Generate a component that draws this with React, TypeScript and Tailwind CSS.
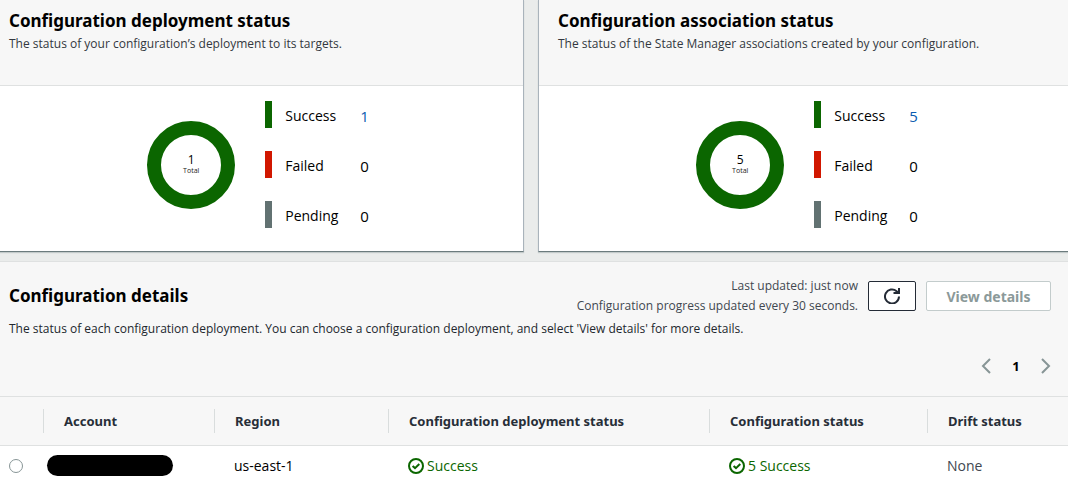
import { useState } from "react";

interface Segment {
  label: string;
  count: number;
  bar: string;
}

interface StatusCardProps {
  title: string;
  description: string;
  segments: Segment[];
}

const deployment: Segment[] = [
  { label: "Success", count: 1, bar: "bg-[#0b6600]" },
  { label: "Failed", count: 0, bar: "bg-[#d11700]" },
  { label: "Pending", count: 0, bar: "bg-[#627272]" },
];

const association: Segment[] = [
  { label: "Success", count: 5, bar: "bg-[#0b6600]" },
  { label: "Failed", count: 0, bar: "bg-[#d11700]" },
  { label: "Pending", count: 0, bar: "bg-[#627272]" },
];

const columns = [
  { label: "Account", width: "w-[171px]" },
  { label: "Region", width: "w-[174px]" },
  { label: "Configuration deployment status", width: "w-[321px]" },
  { label: "Configuration status", width: "w-[218px]" },
  { label: "Drift status", width: "" },
];

function Donut({ total }: { total: number }) {
  return (
    <div className="grid size-[88px] shrink-0 place-items-center rounded-full border-[14px] border-[#0b6600]">
      <div className="flex flex-col items-center">
        <span className="text-[12px] leading-3 text-black">{total}</span>
        <span className="text-[7px] leading-[10px] text-[#222]">Total</span>
      </div>
    </div>
  );
}

function StatusCard({ title, description, segments }: StatusCardProps) {
  const total = segments.reduce((sum, s) => sum + s.count, 0);
  return (
    <section className="border-x border-b border-x-[#a9b3bb] border-b-[#6b7b7d] bg-white shadow-[0_1px_1px_#c3caca]">
      <header className="h-[86px] border-b border-[#dfe1e1] bg-[#f7f7f7] px-[19px] pt-[9px]">
        <h2 className="font-['Noto_Sans',sans-serif] text-[17px] leading-6 font-bold text-black">{title}</h2>
        <p className="text-[12px] leading-[22px] text-[#333840]">{description}</p>
      </header>
      <div className="flex items-center justify-center gap-[30px] pt-[15px] pb-[23px] pl-[3px]">
        <Donut total={total} />
        <ul className="flex flex-col gap-[23px]">
          {segments.map((s) => (
            <li key={s.label} className="flex h-[27px]">
              <span className={`w-[7px] ${s.bar}`} />
              <span className="ml-[13px] w-[75px] pt-[3px] text-[14px] leading-6 text-black">{s.label}</span>
              {s.count > 0 ? (
                <a href="#" className="pt-[3px] text-[15px] leading-6 text-[#0a5cb0]">
                  {s.count}
                </a>
              ) : (
                <span className="pt-[3px] text-[15px] leading-6 text-black">{s.count}</span>
              )}
            </li>
          ))}
        </ul>
      </div>
    </section>
  );
}

function StatusOk({ children }: { children: string }) {
  return (
    <span className="flex items-center gap-[3px] text-[#0b6600]">
      <svg width="16" height="16" viewBox="0 0 16 16" fill="none" stroke="currentColor" strokeWidth="2">
        <circle cx="8" cy="8" r="7" />
        <path d="M4.6 7.9 7 10.1 11.3 6" />
      </svg>
      {children}
    </span>
  );
}

function Chevron({ d }: { d: string }) {
  return (
    <svg width="10" height="16" viewBox="0 0 10 16" fill="none" stroke="#879596" strokeWidth="2">
      <path d={d} />
    </svg>
  );
}

export default function App() {
  const [selected, setSelected] = useState(false);

  return (
    <main className="h-screen overflow-hidden bg-[#eaeceb] font-['Open_Sans',sans-serif]">
      <div className="-mr-[5px] -ml-[11px]">
        <div className="grid grid-cols-2 gap-[14px]">
          <StatusCard
            title="Configuration deployment status"
            description="The status of your configuration’s deployment to its targets."
            segments={deployment}
          />
          <StatusCard
            title="Configuration association status"
            description="The status of the State Manager associations created by your configuration."
            segments={association}
          />
        </div>

        <section className="mt-[9px] border border-[#dfe1e1] bg-[#f7f7f7]">
          <header className="px-[19px] pt-[14px]">
            <div className="flex items-center">
              <h2 className="flex-1 font-['Noto_Sans',sans-serif] text-[17px] leading-6 font-bold text-black">
                Configuration details
              </h2>
              <p className="pr-[10px] text-right text-[12px] leading-5 text-[#414750]">
                Last updated: just now
                <br />
                Configuration progress updated every 30 seconds.
              </p>
              <div className="flex gap-[10px] pr-[2px]">
                <button
                  type="button"
                  aria-label="Refresh"
                  className="flex h-[30px] w-12 items-center justify-center rounded-[2px] border border-[#242b36] bg-white"
                >
                  <svg width="16" height="16" viewBox="0 0 16 16" fill="none" stroke="#242b36" strokeWidth="2">
                    <path d="M15 8.5A7 7 0 1 1 12.6 3.2L14.4 5" />
                    <path d="M15 0v5H9.5" />
                  </svg>
                </button>
                <button
                  type="button"
                  disabled
                  className="h-[30px] w-[125px] rounded-[2px] border border-[#c3cccc] bg-white font-['Noto_Sans',sans-serif] text-[14px] font-bold text-[#8b9999]"
                >
                  View details
                </button>
              </div>
            </div>
            <p className="pt-[2px] text-[12px] leading-[22px] text-[#22272e]">
              The status of each configuration deployment. You can choose a configuration deployment, and select 'View
              details' for more details.
            </p>
            <nav className="flex items-center justify-end gap-5 pt-4 pr-[2px] pb-5">
              <button type="button" aria-label="Previous page">
                <Chevron d="M9 1 2 8l7 7" />
              </button>
              <button type="button" className="w-[10px] text-[13px] leading-5 font-bold text-black">
                1
              </button>
              <button type="button" aria-label="Next page">
                <Chevron d="M1 1l7 7-7 7" />
              </button>
            </nav>
          </header>

          <table className="w-full table-fixed border-collapse text-left text-[14px]">
            <thead>
              <tr className="h-[49px] border-y border-[#dfe1e1]">
                <th className="w-[54px]" />
                {columns.map((c) => (
                  <th
                    key={c.label}
                    className={`${c.width} p-0 font-['Noto_Sans',sans-serif] text-[13px] font-bold text-[#272e38]`}
                  >
                    <div className="-ml-px h-6 border-l border-[#d9dddd] pl-5 leading-6">{c.label}</div>
                  </th>
                ))}
              </tr>
            </thead>
            <tbody>
              <tr className="h-10 bg-white text-black">
                <td className="pl-[19px]">
                  <input
                    type="radio"
                    name="account"
                    aria-label="Select account"
                    checked={selected}
                    onChange={() => setSelected(true)}
                    className="block size-[14px] appearance-none rounded-full border border-[#879596] bg-white checked:border-4 checked:border-[#0a5cb0]"
                  />
                </td>
                <td className="pl-[3px]">
                  <div className="h-[21px] w-[126px] rounded-full bg-black" />
                </td>
                <td className="pl-[19px]">us-east-1</td>
                <td className="pl-[19px]">
                  <StatusOk>Success</StatusOk>
                </td>
                <td className="pl-[19px]">
                  <StatusOk>5 Success</StatusOk>
                </td>
                <td className="pl-[19px] text-[#414750]">None</td>
              </tr>
            </tbody>
          </table>
        </section>
      </div>
    </main>
  );
}
